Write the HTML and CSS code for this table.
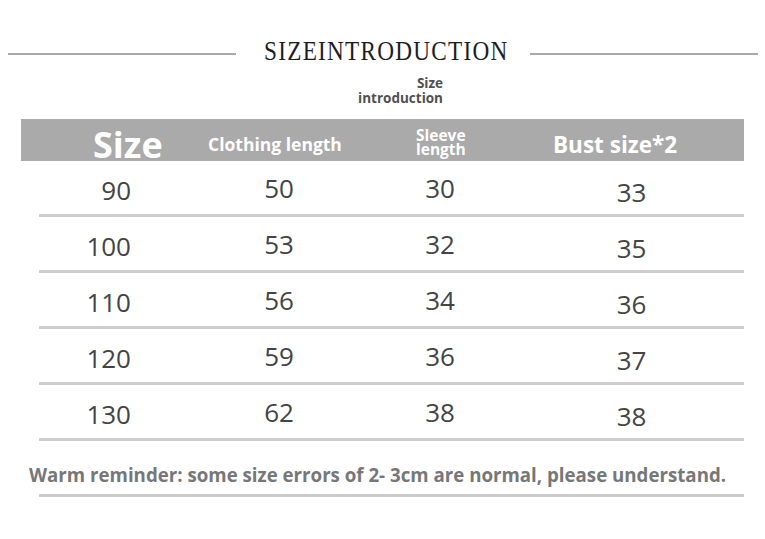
FILE: index.html
```html
<!DOCTYPE html>
<html>
<head>
<meta charset="utf-8">
<link rel="stylesheet" href="styles.css">
</head>
<body>
<div class="page">
  <div class="title-row">
    <span class="rule"></span>
    <h1 class="title"><span class="title-text">SIZEINTRODUCTION</span></h1>
    <span class="rule"></span>
  </div>
  <div class="subtitle"><span class="sub-line">Size</span><span class="sub-line">introduction</span></div>

  <div class="table">
    <div class="thead">
      <div class="th th-size">Size</div>
      <div class="th th-len">Clothing length</div>
      <div class="th th-sleeve"><span class="sl-line">Sleeve</span><span class="sl-line">length</span></div>
      <div class="th th-bust">Bust size*2</div>
    </div>
    <div class="row"><div class="td c1">90</div><div class="td c2">50</div><div class="td c3">30</div><div class="td c4">33</div></div>
    <div class="row"><div class="td c1">100</div><div class="td c2">53</div><div class="td c3">32</div><div class="td c4">35</div></div>
    <div class="row"><div class="td c1">110</div><div class="td c2">56</div><div class="td c3">34</div><div class="td c4">36</div></div>
    <div class="row"><div class="td c1">120</div><div class="td c2">59</div><div class="td c3">36</div><div class="td c4">37</div></div>
    <div class="row"><div class="td c1">130</div><div class="td c2">62</div><div class="td c3">38</div><div class="td c4">38</div></div>
  </div>

  <p class="note">Warm reminder: some size errors of 2- 3cm are normal, please understand.</p>
  <div class="note-rule"></div>
</div>
</body>
</html>
```
FILE: styles.css
```css
* { box-sizing: border-box; }
html, body { margin: 0; padding: 0; background: #ffffff; }
body { font-family: "Open Sans", "Noto Sans", sans-serif; width: 765px; height: 539px; overflow: hidden; }

.page { width: 765px; }

.title-row {
  display: flex;
  align-items: flex-start;
  padding: 0 7px 0 8px;
  margin-top: 37px;
}
.rule {
  flex: 1;
  height: 2px;
  margin-top: 16px;
  background: #a9a9a9;
}
.title {
  margin: 0 -3px 0 3px;
  font-family: "Liberation Serif", "Times New Roman", serif;
  font-weight: 400;
  font-size: 28px;
  line-height: 28px;
  letter-spacing: 1.5px;
  color: #1e1e1e;
}
.title-text {
  display: inline-block;
  transform: scaleX(0.83);
}

.subtitle {
  display: flex;
  flex-direction: column;
  align-items: flex-end;
  width: 88px;
  margin: 11px 0 0 355px;
  font-weight: 700;
  font-size: 13.5px;
  line-height: 15px;
  color: #505050;
}
.sub-line { display: block; }

.table { margin: 13px 21px 0 21px; }

.thead {
  display: grid;
  grid-template-columns: 115px 208px 137px 1fr;
  align-items: center;
  height: 42px;
  padding: 8px 0 0 72px;
  background: #aaaaaa;
  color: #ffffff;
  font-weight: 700;
  white-space: nowrap;
}
.th { line-height: 1; }
.th-size { font-size: 36px; }
.th-len { font-size: 17.5px; }
.th-sleeve {
  display: flex;
  flex-direction: column;
  font-size: 15.5px;
  line-height: 14px;
  margin-bottom: 6px;
}
.sl-line { display: block; }
.th-bust { font-size: 22.5px; }

.row {
  display: grid;
  grid-template-columns: 142px 196px 126px 1fr;
  align-items: center;
  height: 56px;
  margin-left: 18px;
  border-bottom: 3px solid #cdcdcd;
  font-size: 26px;
  line-height: 1;
  color: #444444;
}
.td { text-align: center; }
.c1 { text-align: right; padding-right: 50px; margin-top: 4px; }
.c4 { padding-left: 16px; margin-top: 8px; }

.note {
  margin: 25px 0 0 0;
  padding-left: 29px;
  font-weight: 700;
  font-size: 18.7px;
  line-height: 1;
  color: #777777;
  white-space: nowrap;
}
.note-rule {
  height: 3px;
  margin: 9px 21px 0 39px;
  background: #cccccc;
}
```
